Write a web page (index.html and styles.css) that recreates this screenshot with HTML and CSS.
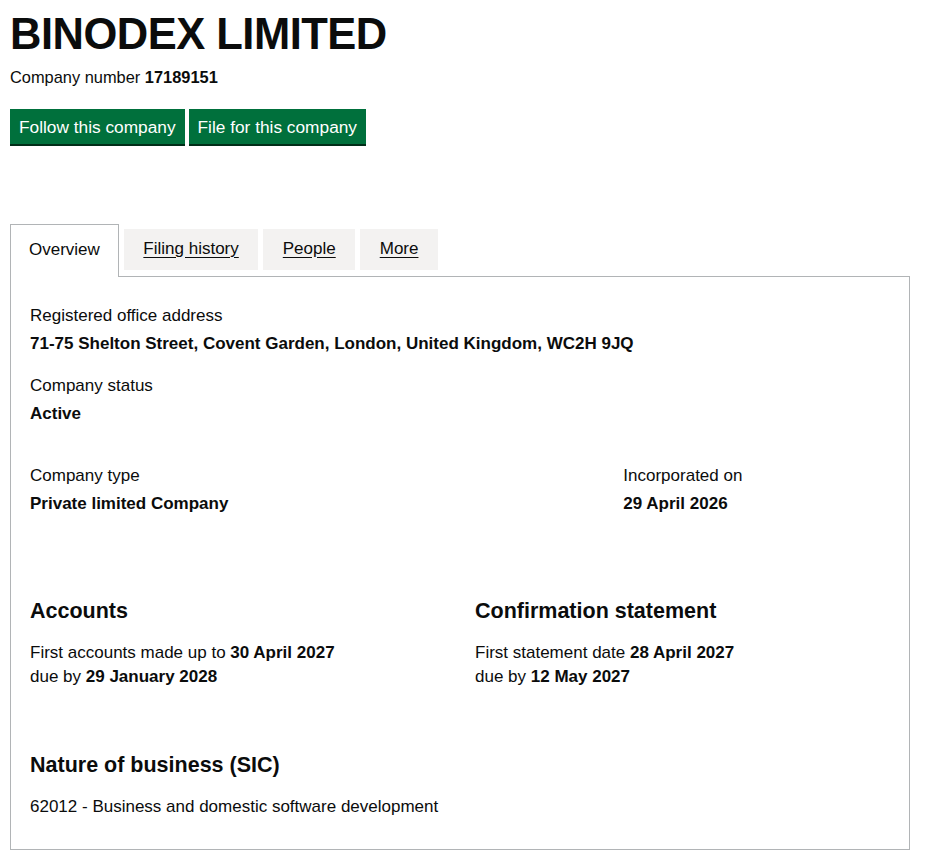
FILE: index.html
```html
<!DOCTYPE html>
<html lang="en">
<head>
    <meta charset="UTF-8">
    <meta name="viewport" content="width=device-width, initial-scale=1.0">
    <title>BINODEX LIMITED - Overview</title>
    <link rel="stylesheet" href="styles.css">
</head>
<body>
    <!-- 公司标题 -->
    <div class="company-header">
        <h1 class="company-name">BINODEX LIMITED</h1>
        <p class="company-number">Company number <strong>17189151</strong></p>
        <div class="actions">
            <a href="#" class="button">Follow this company</a>
            <a href="#" class="button">File for this company</a>
        </div>
    </div>

    <!-- 标签页 -->
    <div class="tabs">
        <ul class="tab-list">
            <li class="tab selected"><a href="#">Overview</a></li>
            <li class="tab"><a href="#">Filing history</a></li>
            <li class="tab"><a href="#">People</a></li>
            <li class="tab"><a href="#">More</a></li>
        </ul>

        <div class="panel">
            <dl class="field">
                <dt>Registered office address</dt>
                <dd>71-75 Shelton Street, Covent Garden, London, United Kingdom, WC2H 9JQ</dd>
            </dl>
            <dl class="field">
                <dt>Company status</dt>
                <dd>Active</dd>
            </dl>

            <div class="row row-type">
                <dl class="field two-thirds">
                    <dt>Company type</dt>
                    <dd>Private limited Company</dd>
                </dl>
                <dl class="field one-third">
                    <dt>Incorporated on</dt>
                    <dd>29 April 2026</dd>
                </dl>
            </div>

            <div class="row row-dates">
                <div class="half">
                    <h2 class="heading">Accounts</h2>
                    <p class="text">First accounts made up to <strong>30 April 2027</strong><br>
                        due by <strong>29 January 2028</strong></p>
                </div>
                <div class="half">
                    <h2 class="heading">Confirmation statement</h2>
                    <p class="text">First statement date <strong>28 April 2027</strong><br>
                        due by <strong>12 May 2027</strong></p>
                </div>
            </div>

            <h2 class="heading sic-heading">Nature of business (SIC)</h2>
            <ul class="sic-list">
                <li>62012 - Business and domestic software development</li>
            </ul>
        </div>
    </div>
</body>
</html>
```

FILE: styles.css
```css
body {
    font-family: "Liberation Sans", Arial, sans-serif;
    font-size: 17px;
    line-height: 24px;
    color: #0b0c0c;
    background-color: #ffffff;
    margin: 0;
    padding: 0 17px 0 10px;
}

.company-name {
    font-size: 43.5px;
    line-height: 50px;
    font-weight: 700;
    margin: 9px 0 6px;
    letter-spacing: -0.5px;
}

.company-number {
    font-size: 16.4px;
    margin: 0 0 20px;
}

.actions {
    display: flex;
    gap: 4px;
    margin-bottom: 80px;
}

.button {
    display: inline-block;
    padding: 6px 9px 5px;
    font-size: 17.3px;
    line-height: 24px;
    color: #ffffff;
    background-color: #00703c;
    text-decoration: none;
    box-shadow: 0 2px 0 #002d18;
}

/* 标签页 */
.tab-list {
    display: flex;
    align-items: flex-start;
    list-style: none;
    margin: 0 0 -1px;
    padding: 0;
}

.tab {
    margin: 5px 5px 0 0;
    background-color: #f3f2f1;
}

.tab a {
    display: block;
    padding: 8px 19.5px 9px;
    color: #0b0c0c;
    text-underline-offset: 3px;
}

.tab.selected {
    margin-top: 0;
    background-color: #ffffff;
    border: 1px solid #b1b4b6;
    border-bottom: 0;
    position: relative;
}

.tab.selected a {
    padding: 13px 18px 15px;
    text-decoration: none;
}

.panel {
    border: 1px solid #b1b4b6;
    padding: 27px 19px 30px;
}

.field {
    margin: 0 0 18px;
}

.field dt {
    margin: 0 0 4px;
}

.field dd {
    margin: 0;
    font-weight: 700;
}

.row {
    display: flex;
    margin: 0 -15px;
}

.row > * {
    box-sizing: border-box;
    padding: 0 15px;
}

.row-type {
    margin-top: 38px;
}

.row-type .field {
    margin-bottom: 0;
}

.two-thirds {
    width: 66.6667%;
}

.one-third {
    width: 33.3333%;
}

.row-dates {
    margin-top: 80px;
}

.half {
    width: 50%;
}

.heading {
    font-size: 21.5px;
    line-height: 30px;
    font-weight: 700;
    margin: 0 0 15px;
}

.text {
    margin: 0;
}

.sic-heading {
    margin-top: 61px;
}

.sic-list {
    list-style: none;
    margin: 0;
    padding: 0;
}
```
